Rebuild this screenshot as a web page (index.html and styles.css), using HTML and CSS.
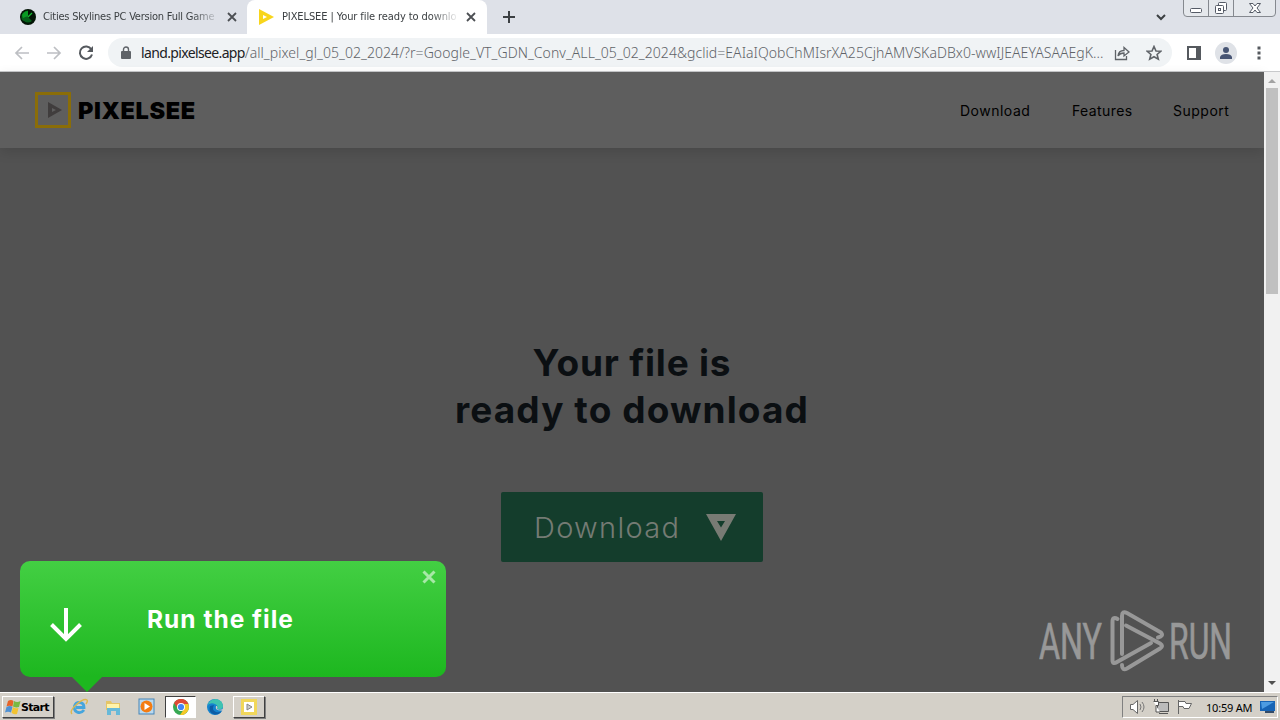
FILE: index.html
```html
<!DOCTYPE html>
<html lang="en">
<head>
<meta charset="utf-8">
<title>PIXELSEE | Your file ready to download</title>
<link rel="stylesheet" href="styles.css">
</head>
<body>
<header class="tabs">
  <div class="tab">
    <svg class="favicon" width="16" height="16" viewBox="0 0 16 16"><circle cx="8" cy="8" r="8" fill="#031405"/><path d="M1.500 8A6.500 6.500 0 0 1 8 1.500L8 8L12 12Q8 15 4 12Q1 11 1.500 8Z" fill="#06601a"/><path d="M2 6Q4 2 8 2L8 7L3 9Z" fill="#0a9a24"/><path d="M8 8L12 4" stroke="#16b933" stroke-width="1.200"/></svg>
    <span class="tab-title title-one">Cities Skylines PC Version Full Game</span>
    <svg class="close" width="10" height="10" viewBox="0 0 10 10"><path d="M1 1L9 9M9 1L1 9"/></svg>
  </div>
  <div class="tab active">
    <svg class="favicon" width="16" height="16" viewBox="0 0 16 16"><path fill="#f8d51c" fill-rule="evenodd" d="M1 0L16 8L1 16ZM5 6V10L9 8Z"/></svg>
    <span class="tab-title title-two">PIXELSEE | Your file ready to downlo</span>
    <svg class="close" width="10" height="10" viewBox="0 0 10 10"><path d="M1 1L9 9M9 1L1 9"/></svg>
  </div>
  <svg class="plus" width="12" height="12" viewBox="0 0 12 12"><path d="M6 0V12M0 6H12"/></svg>
  <svg class="chevron" width="12" height="8" viewBox="0 0 12 8"><path d="M2 2L6 6L10 2"/></svg>
  <svg class="window-controls" width="94" height="18" viewBox="0 0 94 18"><path d="M.5 0V13Q.5 16.5 4 16.5H89Q92.500 16.500 92.500 13V0" fill="#e5e8ec" stroke="#85898f"/><path d="M25.500 0V16M50.500 0V16" stroke="#85898f"/><g fill="#fff" stroke="#555b66"><rect x="7.500" y="8.500" width="11" height="4" rx="1"/><rect x="35.500" y="2.500" width="8" height="8" rx="1"/><rect x="32.500" y="5.500" width="8" height="8" rx="1"/><rect x="35.500" y="8.500" width="2" height="2"/><path d="M66.500 3.500H70L72 6L74 3.500H77.500L74 8L77.500 12.500H74L72 10L70 12.500H66.500L70 8Z"/></g></svg>
</header>
<nav class="toolbar">
  <svg class="nav-icon pale" width="16" height="16" viewBox="0 0 16 16"><path d="M15 8H2M8 2L2 8L8 14"/></svg>
  <svg class="nav-icon pale" width="16" height="16" viewBox="0 0 16 16"><path d="M1 8H14M8 2L14 8L8 14"/></svg>
  <svg class="nav-icon reload" width="16" height="16" viewBox="0 0 16 16"><path d="M13.300 4.300A6.200 6.200 0 1 0 14 9.500"/><path class="solid" d="M15 1V7H9Z"/></svg>
  <div class="address">
    <svg width="10" height="14" viewBox="0 0 10 14"><rect y="5" width="10" height="8" rx="1" fill="#5f6368"/><path d="M2.500 6V3.500A2.500 2.500 0 0 1 7.500 3.500V6" fill="none" stroke="#5f6368" stroke-width="1.400"/></svg>
    <span class="url"><b>land.pixelsee.app</b>/all_pixel_gl_05_02_2024/?r=Google_VT_GDN_Conv_ALL_05_02_2024&amp;gclid=EAIaIQobChMIsrXA25CjhAMVSKaDBx0-wwIJEAEYASAAEgK...</span>
    <svg class="share" width="16" height="16" viewBox="0 0 16 16"><path d="M1.500 5V14.500H12.500V11M4 11Q4.500 5.500 10 5.500V2.500L15 7L10 11V8Q6 8 4 11Z"/></svg>
    <svg class="star" width="16" height="16" viewBox="0 0 16 16"><path d="M8 1.500L10 6L14.800 6.300L11.100 9.500L12.300 14.200L8 11.700L3.700 14.200L4.900 9.500L1.200 6.300L6 6Z"/></svg>
  </div>
  <svg class="panel" width="14" height="14" viewBox="0 0 14 14"><path d="M1 1H13V13H1Z" fill="none" stroke="#55595e" stroke-width="2"/><path d="M9 0H14V14H9Z" fill="#55595e"/></svg>
  <svg class="profile" width="22" height="22" viewBox="0 0 22 22"><circle cx="11" cy="11" r="11" fill="#dfe2e7"/><circle cx="11" cy="8" r="3" fill="#475574"/><path d="M5 17V15Q6 12 11 12Q16 12 17 15V17Z" fill="#475574"/></svg>
  <svg class="dots" width="4" height="14" viewBox="0 0 4 14"><path d="M.5 .5H3.500V3.500H.5ZM.5 5.500H3.500V8.500H.5ZM.5 10.500H3.500V13.500H.5Z" fill="#55595e"/></svg>
</nav>
<main class="viewport">
  <div class="page">
    <div class="site-header">
      <svg width="36" height="36" viewBox="0 0 36 36"><rect x="1.500" y="1.500" width="33" height="33" fill="none" stroke="#8a6d08" stroke-width="3"/><path fill="#403d3d" fill-rule="evenodd" d="M13 10L27 18L13 26ZM17 16V20L21 18Z"/></svg>
      <strong class="brand">PIXELSEE</strong>
      <span class="link link-download">Download</span><span class="link link-features">Features</span><span class="link link-support">Support</span>
    </div>
    <section class="hero">
      <h1><span class="line-one">Your file is</span><br><span class="line-two">ready to download</span></h1>
      <div class="download"><span>Download</span><svg width="30" height="27" viewBox="0 0 30 27"><path fill="#787b74" fill-rule="evenodd" d="M0 0H30L15 27ZM11 7L15 13.500L19 7Z"/></svg></div>
    </section>
  </div>
  <div class="scrollbar"><svg width="16" height="16" viewBox="0 0 16 16"><path d="M4 11H12L8 7Z" fill="#a3a3a3"/></svg><div class="thumb"></div><svg class="down" width="16" height="16" viewBox="0 0 16 16"><path d="M4 5H12L8 9Z" fill="#505050"/></svg></div>
  <aside class="prompt">
    <svg class="arrow" width="32" height="34" viewBox="0 0 32 34"><path d="M16 0V31M1.500 16.500L16 31L30.500 16.500"/></svg>
    <strong>Run the file</strong>
    <svg class="dismiss" width="14" height="14" viewBox="0 0 14 14"><path d="M1.500 1.500L12.500 12.500M12.500 1.500L1.500 12.500"/></svg>
    <svg class="tail" width="32" height="16" viewBox="0 0 32 16"><path d="M0 0H32L16 16Z" fill="#1db71f"/></svg>
  </aside>
  <svg class="watermark" width="225" height="66" viewBox="0 0 225 66"><g class="mark-text"><text x="0" y="50" textLength="63" lengthAdjust="spacingAndGlyphs">ANY</text><text x="130" y="50" textLength="63" lengthAdjust="spacingAndGlyphs">RUN</text></g><g class="mark-lines"><path d="M78.500 10Q73.500 7 73.500 13V51Q73.500 56 78 53L112 34"/><path d="M83 45V7Q83 1.500 88 4L122 23.500Q125 27 119 28.500"/><path d="M87 16.500L121 34.500Q125 37 121 39.500L88 59.500Q83 62 83 56"/></g></svg>
</main>
<footer class="taskbar">
  <div class="start"><svg width="16" height="16" viewBox="0 0 16 16"><path d="M3 2Q6 0 8.500 2L7.500 7.500Q4 6 1.500 7.500Z" fill="#e66429"/><path d="M9 2Q12 4 15.500 2L14 8Q11 9 8 7.500Z" fill="#79b943"/><path d="M1.500 8Q5 6 7.500 8L6 13.500Q3 12 0 13.500Z" fill="#4f91d4"/><path d="M8 8Q10 10 13.500 9L12 15Q8 16 6.500 13.500Z" fill="#f2c332"/></svg><b>Start</b></div>
  <svg class="task-icon" width="18" height="18" viewBox="0 0 18 18"><path d="M14 12Q11 16 7 14Q3.500 12 4.500 8Q6 4 10 4.500Q14 5 14 9.500H6" fill="none" stroke="#45a5dd" stroke-width="2.800"/><path d="M2 16Q-1 13 7 6Q14 0 17 2Q18 3 16 6" fill="none" stroke="#dfb84c" stroke-width="1.400"/></svg>
  <svg class="task-icon" width="18" height="18" viewBox="0 0 18 18"><path d="M2 3H7L8 5H16V12H2Z" fill="#e5c567"/><path d="M3 6H15V10H3Z" fill="#fff3aa"/><path d="M3 10H16V17H12V13H7V17H3Z" fill="#67b9d9"/></svg>
  <svg class="task-icon" width="18" height="18" viewBox="0 0 18 18"><rect x="1" y="1" width="15" height="15" fill="#b9d9ef" stroke="#4685b8"/><circle cx="8.500" cy="8.500" r="6" fill="#f47c12"/><path d="M6.500 5V12L12 8.500Z" fill="#fff"/></svg>
  <div class="task-slot chrome"><svg width="16" height="16" viewBox="0 0 16 16"><circle cx="8" cy="8" r="8" fill="#36a852"/><path d="M1 4A8 8 0 0 1 15 4L15.500 5H8L5 10Z" fill="#df4936"/><path d="M15.300 5A8 8 0 0 1 7 16L11 10L11.500 5Z" fill="#f6c827"/><circle cx="8" cy="8" r="4" fill="#fff"/><circle cx="8" cy="8" r="3.100" fill="#4285f4"/></svg></div>
  <svg class="task-icon edge" width="18" height="18" viewBox="0 0 18 18"><circle cx="9" cy="9" r="8" fill="#1583ce"/><path d="M1.500 7Q4 1 10 1Q17 2 17 9Q16 12 11 11Q13 8 9 6Q5 4 1.500 7Z" fill="#3fc3b0"/><path d="M8 7Q5 12 10 14Q13 15 16 13Q12 18 7 16Q2 13 4 8Z" fill="#0d5ca5"/><path d="M10 8Q8.500 13 16.500 12.500L17.500 11Q13 12.500 11 11Q12 9.500 11 8Z" fill="#d4d0c8"/></svg>
  <div class="task-slot pixel"><svg width="16" height="16" viewBox="0 0 16 16"><rect x="1.500" y="1.500" width="13" height="13" fill="#fff" stroke="#f1d75b" stroke-width="3"/><path d="M6 5V11L11 8Z" fill="#ccc" stroke="#888"/></svg></div>
  <div class="tray">
    <svg width="18" height="16" viewBox="0 0 18 16"><path d="M1.500 5.500H4L8.500 1.500V14.500L4 10.500H1.500Z" fill="#fff" stroke="#666"/><path d="M11 5Q13 8 11 11M13 3Q17 8 13 13" fill="none" stroke="#777"/></svg>
    <svg width="18" height="16" viewBox="0 0 18 16"><path d="M4.500 3.500H15.500V12.500H4.500ZM6 14.500H15" fill="#bbb" stroke="#555"/><path d="M.5 2.500H5.500V6.500H3V13H7M1.500 0V3M4.500 0V3" fill="#fff" stroke="#555"/></svg>
    <svg width="18" height="16" viewBox="0 0 18 16"><path d="M1.500 1V15M2 2.500H8L9 4.500H14.500L12 9.500H7L6 7.500H2" fill="#fff" stroke="#666"/></svg>
    <span>10:59 AM</span>
    <svg class="desktop" width="16" height="14" viewBox="0 0 16 14"><path d="M0 1H15V11H0Z" fill="#1764b5"/><path d="M1 2H14L2 9Z" fill="#4d9ce2"/><path d="M5 12H14" stroke="#334b68" stroke-width="2"/></svg>
  </div>
</footer>
</body>
</html>
```
FILE: styles.css
```css
* { box-sizing: border-box; }
body { margin: 0; width: 1280px; height: 720px; overflow: hidden; display: flex; flex-direction: column; font-family: "Noto Sans", sans-serif; }
svg { display: block; flex: none; }
.tabs { height: 34px; flex: none; display: flex; align-items: flex-start; background: #dee1e8; color: #3c4043; }
.tab { width: 247px; height: 34px; padding: 0 10px 0 20px; display: flex; align-items: center; }
.tab.active { width: 240px; padding: 0 11px 0 11px; background: #fff; border-radius: 8px 8px 0 0; }
.tab-title { width: 177px; margin-left: 7px; overflow: hidden; white-space: nowrap; font-family: "DejaVu Sans Condensed", "DejaVu Sans", sans-serif; font-stretch: condensed; font-size: 11px; line-height: 16px; mask-image: linear-gradient(90deg, #000 84%, transparent 100%); }
.title-one { letter-spacing: -.22px; }
.title-two { letter-spacing: -.1px; margin-left: 8px; }
.close { margin-left: 7px; stroke: #4c4f53; stroke-width: 1.8; }
.plus { margin: 11px 0 0 16px; stroke: #3c4043; stroke-width: 2; }
.chevron { margin: 13px 16px 0 auto; fill: none; stroke: #3c4043; stroke-width: 2; }
.window-controls { margin-right: 3px; }
.toolbar { height: 38px; flex: none; display: flex; align-items: center; padding: 0 20px 0 14px; background: #fff; border-bottom: 1px solid #c8c9cb; }
.nav-icon { margin-right: 16px; fill: none; stroke: #55595e; stroke-width: 2; }
.pale { stroke: #bdbfc3; stroke-width: 1.7; }
.reload { margin-right: 14px; }
.solid { fill: #55595e; stroke: none; }
.address { width: 1064px; height: 29px; padding: 0 10px 0 13px; display: flex; align-items: center; background: #f0f3f5; border-radius: 15px; }
.url { width: 964px; margin-left: 10px; white-space: nowrap; font-size: 14px; line-height: 24px; letter-spacing: .05px; color: #5f6368; font-weight: 300; }
.url b { font-weight: 400; color: #202124; letter-spacing: -.64px; }
.share, .star { fill: none; stroke: #5f6368; stroke-width: 1.3; }
.share { margin-left: 9px; }
.star { margin-left: 16px; stroke-width: 1.6; }
.panel { margin-left: 15px; }
.profile { margin-left: 14px; }
.dots { margin-left: 20px; }
.viewport { height: 620px; flex: none; display: flex; position: relative; background: #525252; }
.page { width: 1264px; font-family: Inter, sans-serif; }
.site-header { height: 76px; padding: 0 35px; display: flex; align-items: center; background: #5e5e5e; box-shadow: 0 4px 12px rgba(0,0,0,.12); color: #000; }
.brand { width: 160px; margin-left: 7px; font-weight: 900; font-size: 23.5px; letter-spacing: .6px; }
.link { font-size: 14px; letter-spacing: .5px; white-space: nowrap; font-weight: 400; }
.link-download { margin-left: auto; width: 70px; }
.link-features { margin-left: 42px; width: 60px; letter-spacing: .4px; }
.link-support { margin-left: 41px; width: 56px; }
.hero { padding-top: 191px; display: flex; flex-direction: column; align-items: center; }
h1 { margin: 0; text-align: center; font-size: 37px; line-height: 47px; font-weight: 700; color: #0b0f12; white-space: nowrap; }
.line-one { letter-spacing: .8px; }
.line-two { letter-spacing: 1.1px; }
.download { width: 262px; height: 70px; margin-top: 59px; padding: 0 27px 0 33px; display: flex; align-items: center; justify-content: space-between; border-radius: 2px; background: #143d2c; color: #747b74; font-size: 29px; font-weight: 300; letter-spacing: 1.3px; }
.scrollbar { width: 16px; display: flex; flex-direction: column; background: #f1f1f1; }
.thumb { width: 12px; height: 206px; margin-left: 2px; background: #c0c0c0; }
.down { margin-top: auto; }
.prompt { position: absolute; left: 20px; top: 489px; width: 426px; height: 116px; padding: 0 30px; display: flex; align-items: center; border-radius: 10px; background: linear-gradient(#43cf43, #1db71f); color: #fff; font-family: Inter, sans-serif; }
.arrow { margin-top: 12px; fill: none; stroke: #fff; stroke-width: 4; }
.prompt strong { margin-left: 65px; font-size: 24.5px; line-height: 32px; font-weight: 700; letter-spacing: 1px; white-space: nowrap; }
.dismiss { position: absolute; right: 10px; top: 9px; stroke: #a7e8a7; stroke-width: 3; }
.tail { position: absolute; left: 51px; top: 115px; }
.watermark { position: absolute; left: 1039px; top: 537px; }
.mark-text { font-family: Roboto, sans-serif; font-size: 50px; font-weight: 400; fill: #989898; stroke: #989898; stroke-width: .7; }
.mark-lines { fill: none; stroke: #989898; stroke-width: 4; stroke-linecap: round; }
.taskbar { height: 28px; flex: none; display: flex; align-items: center; padding: 1px 2px 0; background: #d4d0c8; border-top: 1px solid #fff; color: #000; }
.start { width: 52px; height: 22px; padding-left: 2px; display: flex; align-items: center; gap: 0; border: 1px solid; border-color: #fff #404040 #404040 #fff; box-shadow: 1px 1px #808080; font-family: "DejaVu Sans", sans-serif; font-size: 11px; }
.start b { letter-spacing: -.7px; }
.task-icon { margin-left: 16px; }
.start + .task-icon { margin-left: 16px; }
.task-slot { width: 31px; height: 22px; display: flex; align-items: center; justify-content: center; border: 1px solid #404040; border-right-color: #fff; border-bottom-color: #fff; }
.chrome { margin-left: 9px; background: #fff; }
.edge { margin-left: 10px; }
.pixel { margin-left: 9px; width: 32px; border-color: #fff #404040 #404040 #fff; background: #d4d0c8; box-shadow: 1px 1px #808080; }
.tray { width: 156px; height: 22px; margin-left: auto; padding: 0 1px 0 6px; display: flex; align-items: center; border: 1px solid; border-color: #808080 #fff #fff #808080; gap: 6px; font-size: 11px; }
.tray span { width: 48px; margin-left: 5px; margin-right: 1px; white-space: nowrap; letter-spacing: -.2px; }
```
